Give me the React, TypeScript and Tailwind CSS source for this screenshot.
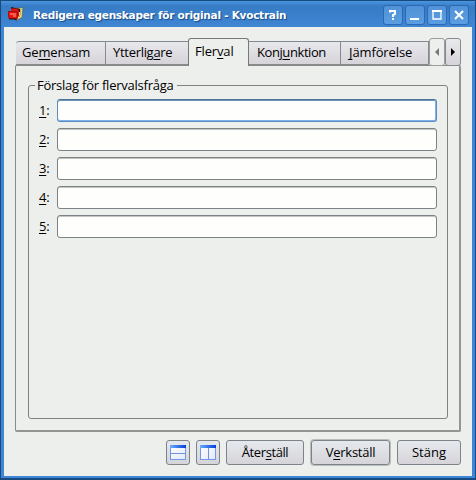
import type { ReactNode } from 'react';

function U({ children }: { children: string }) {
  return <span className="underline underline-offset-2 decoration-1">{children}</span>;
}

function Tab({ className, children }: { className: string; children: ReactNode }) {
  return (
    <div className={`h-6 shrink-0 border border-[#858a8e] border-l-0 bg-linear-to-b from-[#e8e8ec] to-[#d6d3d9] pt-px ${className}`}>
      {children}
    </div>
  );
}

function WinButton({ className = '', children }: { className?: string; children: ReactNode }) {
  return (
    <button className={`h-5 w-5 rounded-[3px] border border-[#2b69b4] bg-linear-to-b from-[#5292d8] to-[#5a9de0] ${className}`}>
      <svg width="18" height="18" viewBox="0 0 18 18" fill="none" stroke="#fff" strokeWidth="2">
        {children}
      </svg>
    </button>
  );
}

function Push({ className, children }: { className: string; children: ReactNode }) {
  return (
    <button className={`flex h-[25px] items-center justify-center rounded-[3px] border border-[#7c8389] bg-linear-to-b from-[#e5e9ed] to-[#d6d4d9] pb-px ${className}`}>
      {children}
    </button>
  );
}

function PaneIcon({ split }: { split: 'rows' | 'columns' }) {
  return (
    <svg width="16" height="15" viewBox="0 0 16 15" shapeRendering="crispEdges">
      <defs>
        <linearGradient id={`bar-${split}`}>
          <stop stopColor="#69b0ff" />
          <stop offset="1" stopColor="#063ed8" />
        </linearGradient>
        <linearGradient id={`pane-${split}`} x2="1" y2="1">
          <stop stopColor="#fff" />
          <stop offset="1" stopColor="#e4e7f8" />
        </linearGradient>
      </defs>
      <rect x=".5" y=".5" width="15" height="14" fill={`url(#pane-${split})`} stroke="#6f98e8" />
      <rect width="16" height="3" fill={`url(#bar-${split})`} />
      {split === 'rows' ? <path d="M1 8.5h14" stroke="#7092d8" /> : <path d="M8.5 3v11" stroke="#7092d8" />}
    </svg>
  );
}

export default function App() {
  return (
    <div className="flex h-[480px] w-[476px] flex-col overflow-hidden border border-b-2 border-[#174a7e] bg-[#3d87d6] pr-[3px] pb-[2px] pl-[3px] font-['Open_Sans',sans-serif] text-[13px] leading-[18px] text-black">
      <header className="-mx-[3px] flex h-[26px] shrink-0 items-center bg-linear-to-b from-[#4b95df] via-[#377bc5] via-20% to-[#3f86d3] pr-[6px] pl-[7px]">
        <svg width="16" height="16" viewBox="0 0 16 16" className="shrink-0">
          <path d="M9 2.5l6-1-1 10-6 3z" fill="#e8dc90" stroke="#5b522a" strokeWidth=".6" />
          <path d="M13 3l-1.5 8" stroke="#b5a24c" />
          <path d="M3 1l9 2v3H3z" fill="#2a0c08" />
          <path d="M3 2.5l6 0 2 2v6H3z" fill="#e01812" />
          <path d="M0 5.500h9.500v7H1z" fill="#f01008" stroke="#9b0808" strokeWidth=".8" />
          <path d="M2 8h6M5 10h3" stroke="#ffa8a0" />
          <path d="M1 13l5 0 3 1" stroke="#341010" fill="none" />
        </svg>
        <h1 className="ml-[9px] pt-[2px] whitespace-nowrap font-['DejaVu_Sans',sans-serif] text-[10.5px] font-bold tracking-[-0.25px] text-white [text-shadow:1px_1px_1px_#174884]">Redigera egenskaper för original - Kvoctrain</h1>
        <div className="ml-auto flex pt-[2px]">
          <WinButton><path d="M6 6.5V5h5v3L9 9v2M9 12v2" /></WinButton>
          <WinButton className="ml-[2px]"><path d="M4 13h9" /></WinButton>
          <WinButton className="ml-[2px]"><path d="M5 5h8v8H5z" strokeWidth="1.3" /><path d="M4 5h10" /></WinButton>
          <WinButton className="ml-[2px]"><path d="M5 5l8 8M13 5l-8 8" /></WinButton>
        </div>
      </header>
      <main className="flex flex-1 flex-col bg-[#edefec] pt-[11px] pr-[11px] pl-[11px]">
        <nav className="relative z-10 flex h-[28px] shrink-0 items-start whitespace-nowrap">
          <Tab className="ml-px mt-[3px] w-[90px] rounded-tl-[3px] border-l pl-[6px] tracking-[-0.18px]">Ge<U>m</U>ensam</Tab>
          <Tab className="mt-[3px] w-[82px] border-r-0 pl-[7px] tracking-[-0.3px]">Ytterlig<U>a</U>re</Tab>
          <div className="h-7 w-[61px] shrink-0 rounded-t-[3px] border border-b-0 border-[#747a78] bg-[#edefec] pt-[3px] pl-[6px] tracking-[-0.15px]">Fler<U>v</U>al</div>
          <Tab className="mt-[3px] w-[92px] pl-[8px] tracking-[-0.42px]">Konj<U>u</U>nktion</Tab>
          <Tab className="mt-[3px] w-[88px] pl-[8px] tracking-[-0.12px]"><U>J</U>ämförelse</Tab>
          <button className="flex h-7 w-4 shrink-0 items-center justify-center rounded-[3px] border border-[#999d99] bg-[#edefec]">
            <svg width="4" height="8"><path d="M4 0v8L0 4z" fill="#777" /></svg>
          </button>
          <button className="flex h-7 w-4 shrink-0 items-center justify-center rounded-[3px] border border-[#858a8e] bg-linear-to-b from-[#e9eaed] to-[#d6d3d9]">
            <svg width="4" height="8"><path d="M0 0v8l4-4z" fill="#000" /></svg>
          </button>
        </nav>
        <section className="-mt-px h-[367px] shrink-0 rounded-[2px] border border-r-2 border-b-2 border-[#878a87] border-r-[#929592] border-b-[#929592] pt-[12px] pl-[12px]">
          <div className="relative mt-[7px] h-[334px] w-[420px] rounded-[3px] border border-[#7f8380] pt-[13px] pl-[10px]">
            <div className="absolute -top-[10px] left-[6px] bg-[#edefec] pr-[3px] pl-[2px] tracking-[-0.24px] whitespace-nowrap">Förslag för flervalsfråga</div>
            <div className="flex flex-col gap-[6px]">
              {['1', '2', '3', '4', '5'].map((n, i) => (
                <label key={n} className="flex h-[23px] items-center">
                  <span className="w-[18px] shrink-0 pb-[2px] tracking-[-0.2px]"><U>{n}</U>:</span>
                  <input className={`h-[23px] w-[380px] rounded-[3px] border bg-[#fefffd] outline-none ${i === 0 ? 'border-[#5d8dbf] border-t-[#4d7398] shadow-[inset_0_-1px_#7db2ea,inset_-1px_0_#7db2ea,inset_0_1px_#6f93b5]' : 'border-[#7d8287] shadow-[inset_0_1px_#c3c5c3]'}`} />
                </label>
              ))}
            </div>
          </div>
        </section>
        <footer className="mt-2 flex h-[25px] shrink-0 justify-end whitespace-nowrap">
          <Push className="w-6"><PaneIcon split="rows" /></Push>
          <Push className="ml-[6px] w-6"><PaneIcon split="columns" /></Push>
          <Push className="ml-[6px] w-[78px] tracking-[-0.4px]"><span>Åter<U>s</U>täll</span></Push>
          <Push className="ml-[7px] w-[79px] tracking-[-0.25px] shadow-[0_0_0_1px_#babebf]"><span>V<U>e</U>rkställ</span></Push>
          <Push className="ml-[7px] w-[64px]"><span>Stän<U>g</U></span></Push>
        </footer>
      </main>
    </div>
  );
}
